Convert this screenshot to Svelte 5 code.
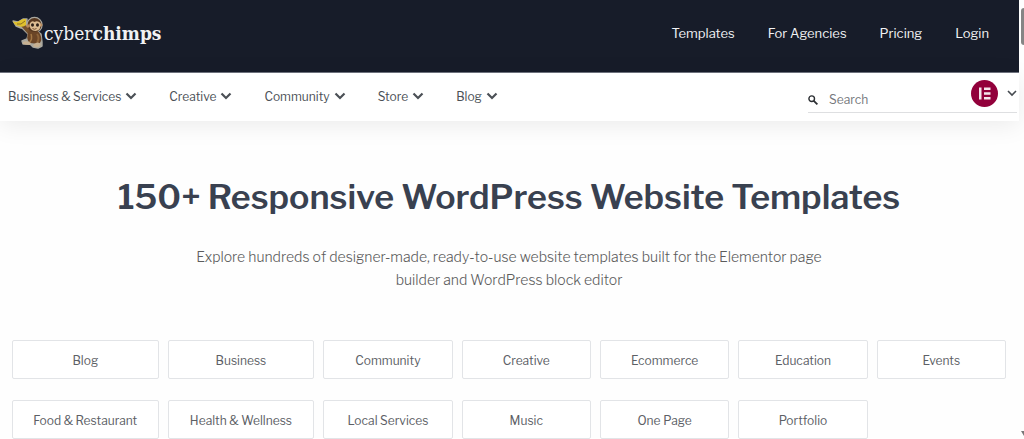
<script>
	const topLinks = ["Templates", "For Agencies", "Pricing", "Login"];
	const menus = ["Business & Services", "Creative", "Community", "Store", "Blog"];
	const categories = [
		"Blog", "Business", "Community", "Creative", "Ecommerce", "Education", "Events",
		"Food & Restaurant", "Health & Wellness", "Local Services", "Music", "One Page", "Portfolio"
	];

	let search = $state("");
	let selected = $state("");
</script>

<div class="page">
	<header class="site-header">
		<a href="/" class="logo">
			<svg class="logo-mark" viewBox="0 0 32 34" aria-hidden="true">
				<g stroke="#aaa89f" stroke-width="1.400" stroke-linejoin="round" fill="#aaa89f">
					<path d="M1 5l5 1 5-3 4 0 0 6-1 3-5 0-5-2z" />
					<path d="M9 11l5-2 5 6-2 4z" />
					<circle cx="22.500" cy="9" r="7.500" />
					<path d="M17 15l8 0 4 3 1 8 0 4-4 2-5-1-3-3-7 0-1-3 5-2z" />
				</g>
				<path d="M9 10l3-2 7 6-2 5z" fill="#75502c" />
				<path d="M17 14q8-2 11 4t-1 10l-9-1q-5-4-1-13z" fill="#6b4526" />
				<path d="M19 18q2 5-2 9" fill="none" stroke="#a47845" stroke-width="1.500" />
				<circle cx="22.500" cy="9" r="7" fill="#573820" />
				<circle cx="16" cy="10" r="1.800" fill="#b9895b" />
				<circle cx="29" cy="9" r="1.400" fill="#b9895b" />
				<path d="M17.500 8q2-4 5-2 3-2 6 1 1 7-5 8-6 0-6-7z" fill="#dcbc92" />
				<ellipse cx="20.500" cy="9" rx="1.500" ry="1.800" fill="#2d2018" />
				<ellipse cx="25.500" cy="9" rx="1.500" ry="1.800" fill="#2d2018" />
				<path d="M20.500 12.500q2 1.500 4 0" fill="none" stroke="#77502f" />
				<path d="M1 5q3 2 6 0l4-2 3 0 0 6q-3 3-8 1-4-1-5-5z" fill="#dfc02d" />
				<path d="M5 8l4 0 4-3" fill="none" stroke="#8d7020" />
				<path d="M25 18q3 4 0 9" fill="none" stroke="#8c6238" stroke-width="2" />
				<path d="M11 26q4-2 8 1l-1 2q-5 0-7-1z" fill="#c6b092" />
				<path d="M22 28q4-3 7 0l-2 3q-4 1-6-1z" fill="#c6b092" />
			</svg>
			<span class="logo-text">cyber<b>chimps</b></span>
		</a>
		<nav class="top-nav">
			{#each topLinks as link}
				<a href="/{link.toLowerCase().replace(' ', '-')}">{link}</a>
			{/each}
		</nav>
	</header>

	<div class="toolbar">
		<nav class="menus">
			{#each menus as menu}
				<button type="button" class="menu">
					{menu}
					<svg width="12" height="8" viewBox="0 0 12 8" aria-hidden="true">
						<path d="M1.500 1.500l4.500 4.500 4.500-4.500" fill="none" stroke="currentColor" stroke-width="2.200" />
					</svg>
				</button>
			{/each}
		</nav>
		<div class="tools">
			<label class="search">
				<svg width="10" height="10" viewBox="0 0 10 10" aria-hidden="true">
					<circle cx="3.700" cy="3.700" r="2.800" fill="none" stroke="currentColor" stroke-width="1.400" />
					<path d="M5.800 5.800l3.600 3.600" stroke="currentColor" stroke-width="1.800" />
				</svg>
				<input type="search" placeholder="Search" aria-label="Search" bind:value={search} />
			</label>
			<button type="button" class="builder" aria-label="Page builder: Elementor">
				<svg width="27" height="27" viewBox="0 0 27 27" aria-hidden="true">
					<circle cx="13.500" cy="13.500" r="13.500" fill="#92003b" />
					<path d="M8 7.500h2.500v12h-2.500zM13 7.500h6.500v2.400h-6.500zM13 12.300h6.500v2.400h-6.500zM13 17.100h6.500v2.400h-6.500z" fill="#f5e6ed" />
				</svg>
				<svg width="10" height="7" viewBox="0 0 10 7" aria-hidden="true">
					<path d="M1 1l4 4 4-4" fill="none" stroke="#454a50" stroke-width="1.600" />
				</svg>
			</button>
		</div>
	</div>

	<main>
		<h1>150+ Responsive WordPress Website Templates</h1>
		<p class="intro">
			Explore hundreds of designer-made, ready-to-use website templates built for the Elementor page builder and WordPress block editor
		</p>
		<div class="categories">
			{#each categories as category}
				<button type="button" class="category" aria-pressed={selected === category} onclick={() => (selected = category)}>
					{category}
				</button>
			{/each}
		</div>
	</main>
</div>

<div class="scrollbar" aria-hidden="true">
	<span class="thumb"></span>
	<svg width="3" height="6" viewBox="0 0 3 6"><path d="M0 0h3v5z" fill="#777" /></svg>
</div>

<style>
	:global(body) {
		background: #fefefe;
	}

	.page {
		margin-right: 5px;
		font-family: "Libre Franklin", Inter, "Liberation Sans", sans-serif;
		font-size: 12px;
		color: #4b5056;
	}

	a {
		color: inherit;
		text-decoration: none;
	}

	button {
		font: inherit;
		color: inherit;
		background: none;
		border: 0;
		padding: 0;
		cursor: pointer;
	}

	svg {
		display: block;
		flex-shrink: 0;
	}

	.site-header {
		display: flex;
		align-items: center;
		justify-content: space-between;
		height: 73px;
		padding: 0 30px 6px 12px;
		box-sizing: border-box;
		background: #171c29;
		border-bottom: 1px solid #717580;
		color: #f1f2f4;
	}

	.logo {
		display: flex;
		align-items: center;
	}

	.logo-mark {
		width: 32px;
		height: 34px;
	}

	.logo-text {
		font-family: "DejaVu Serif Condensed", "DejaVu Serif", serif;
		font-size: 19px;
		line-height: 24px;
	}

	.top-nav {
		display: flex;
		gap: 33px;
		font-size: 13px;
	}

	.toolbar {
		position: relative;
		display: flex;
		align-items: flex-start;
		justify-content: space-between;
		height: 48px;
		padding: 0 2px 0 8px;
		background: #fff;
		box-shadow: 0 4px 24px rgba(0, 0, 0, 0.08);
	}

	.menus {
		display: flex;
		gap: 32px;
		height: 46px;
	}

	.menu {
		display: flex;
		align-items: center;
		gap: 4px;
	}

	.tools {
		display: flex;
		align-items: center;
		width: 209px;
		height: 39px;
		border-bottom: 1px solid #dedfe1;
	}

	.search {
		display: flex;
		flex: 1;
		align-items: center;
		gap: 11px;
		min-width: 0;
		padding-top: 14px;
		color: #2c2f33;
	}

	.search input {
		width: 100%;
		min-width: 0;
		padding: 0;
		border: 0;
		outline: 0;
		background: none;
		font: inherit;
	}

	.search input::placeholder {
		color: #75787c;
		opacity: 1;
	}

	.builder {
		display: flex;
		align-items: center;
		gap: 9px;
		padding-top: 2px;
	}

	main {
		padding: 52px 13px 0 12px;
		text-align: center;
	}

	h1 {
		margin: 0;
		font-size: 34px;
		font-weight: 600;
		line-height: 48px;
		color: #394150;
	}

	.intro {
		max-width: 640px;
		margin: 24px auto 49px;
		font-size: 14px;
		font-weight: 300;
		line-height: 23px;
		color: #5c5c5c;
	}

	.categories {
		display: grid;
		grid-template-columns: repeat(2, 17fr) repeat(5, 15fr);
		gap: 21px 9px;
	}

	.category {
		height: 39px;
		padding-top: 2px;
		border: 1px solid #e2e4e7;
		border-radius: 2px;
		background: #fff;
		color: #5c6065;
		white-space: nowrap;
	}

	.scrollbar {
		position: fixed;
		top: 0;
		right: 0;
		bottom: 0;
		display: flex;
		flex-direction: column;
		justify-content: space-between;
		width: 3px;
		padding: 8px 0 2px;
	}

	.thumb {
		height: 37px;
		border-radius: 3px 0 0 3px;
		background: #858585;
	}
</style>
